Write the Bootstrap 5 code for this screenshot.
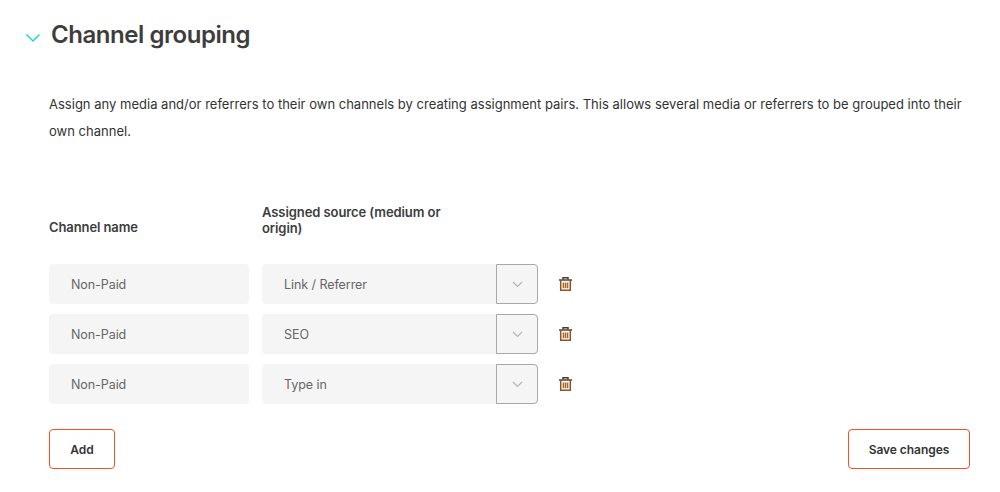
<!DOCTYPE html>
<html lang="en">

<head>
  <meta charset="UTF-8">
  <meta name="viewport" content="width=device-width, initial-scale=1.0">
  <title>Channel grouping</title>
  <link href="https://cdn.jsdelivr.net/npm/bootstrap@5.3.2/dist/css/bootstrap.min.css" rel="stylesheet">
  <style>
    body { font-family: Inter, "Liberation Sans", sans-serif; color: #3d3d3d; background: #fff; overflow: hidden; }
    .page-wrap { padding: 17px 30px 0 25px; height: 492px; }
    .page-title { font-size: 24px; font-weight: 600; line-height: 36px; margin: 0; letter-spacing: -0.45px; color: #3d3d3d; }
    .chev-icon { width: 16px; height: 10px; margin-top: 6px; margin-right: 10px; }
    .section-body { padding-left: 24px; }
    .intro-text { font-size: 13px; line-height: 27px; margin: 38px 0 0; letter-spacing: 0.01px; color: #333; }
    .head-row { margin-top: 52px; height: 46px; column-gap: 13px; }
    .col-name { width: 200px; font-size: 13px; font-weight: 600; line-height: 16px; letter-spacing: -0.1px; padding-top: 14px; }
    .col-source { width: 200px; font-size: 13px; font-weight: 600; line-height: 16px; letter-spacing: -0.08px; }
    .rows-wrap { margin-top: 21px; row-gap: 10px; }
    .pair-row { height: 40px; column-gap: 13px; }
    .field-box { background: #f5f5f5; border-radius: 4px; height: 40px; width: 200px; font-size: 12.5px; letter-spacing: -0.07px; color: #666; padding-left: 22px; }
    .field-label { padding-top: 2px; }
    .field-select { width: 276px; padding-left: 22px; }
    .select-btn { width: 42px; height: 40px; border: 1px solid #a8a8a8; border-radius: 0 4px 4px 0; background: #f5f5f5; }
    .select-btn svg { width: 11px; height: 7px; }
    .trash-icon { width: 13px; height: 14px; margin-left: 8px; margin-bottom: 1px; }
    .foot-row { margin-top: 25px; }
    .btn-outline-brand { border: 1px solid #f0512b; border-radius: 4px; background: #fff; color: #333; font-size: 12px; font-weight: 600; height: 40px; padding: 1px 0 0; letter-spacing: -0.05px; }
    .btn-outline-brand:hover { background: #fff; border-color: #f0512b; color: #333; }
    .add-btn { width: 66px; }
    .save-btn { width: 122px; }
  </style>
</head>

<body>
  <main class="page-wrap">
    <div class="d-flex align-items-center">
      <svg class="chev-icon flex-shrink-0" viewBox="0 0 16 10" fill="none" stroke="#1fd6dc" stroke-width="1.5"><path d="M1.5 1.5 8 8 14.5 1.5"/></svg>
      <h1 class="page-title">Channel grouping</h1>
    </div>

    <div class="section-body">
      <p class="intro-text">Assign any media and/or referrers to their own channels by creating assignment pairs. This allows several media or referrers to be grouped into their own channel.</p>

      <div class="head-row d-flex align-items-center">
        <div class="col-name">Channel name</div>
        <div class="col-source">Assigned source (medium or origin)</div>
      </div>

      <div class="rows-wrap d-flex flex-column">
        <div class="pair-row d-flex align-items-center">
          <div class="field-box field-label d-flex align-items-center">Non-Paid</div>
          <div class="field-box field-select d-flex align-items-center justify-content-between">
            <span class="field-label">Link / Referrer</span>
            <span class="select-btn d-flex align-items-center justify-content-center"><svg viewBox="0 0 11 7" fill="none" stroke="#b5b5b5" stroke-width="1.2"><path d="M1 1 5.5 5.5 10 1"/></svg></span>
          </div>
          <svg class="trash-icon" viewBox="0 0 13 14" fill="none" stroke-width="1.5"><path stroke="#3f3f3f" d="M4 2.5V.8h5v1.7"/><path stroke="#5e3f24" d="M0 3h13"/><path stroke="#8f5220" d="M1.7 3v10.2h9.6V3"/><path stroke="#a8662c" d="M4.4 5.5v5.8M6.5 5.5v5.8M8.6 5.5v5.8"/></svg>
        </div>
        <div class="pair-row d-flex align-items-center">
          <div class="field-box field-label d-flex align-items-center">Non-Paid</div>
          <div class="field-box field-select d-flex align-items-center justify-content-between">
            <span class="field-label">SEO</span>
            <span class="select-btn d-flex align-items-center justify-content-center"><svg viewBox="0 0 11 7" fill="none" stroke="#b5b5b5" stroke-width="1.2"><path d="M1 1 5.5 5.5 10 1"/></svg></span>
          </div>
          <svg class="trash-icon" viewBox="0 0 13 14" fill="none" stroke-width="1.5"><path stroke="#3f3f3f" d="M4 2.5V.8h5v1.7"/><path stroke="#5e3f24" d="M0 3h13"/><path stroke="#8f5220" d="M1.7 3v10.2h9.6V3"/><path stroke="#a8662c" d="M4.4 5.5v5.8M6.5 5.5v5.8M8.6 5.5v5.8"/></svg>
        </div>
        <div class="pair-row d-flex align-items-center">
          <div class="field-box field-label d-flex align-items-center">Non-Paid</div>
          <div class="field-box field-select d-flex align-items-center justify-content-between">
            <span class="field-label">Type in</span>
            <span class="select-btn d-flex align-items-center justify-content-center"><svg viewBox="0 0 11 7" fill="none" stroke="#b5b5b5" stroke-width="1.2"><path d="M1 1 5.5 5.5 10 1"/></svg></span>
          </div>
          <svg class="trash-icon" viewBox="0 0 13 14" fill="none" stroke-width="1.5"><path stroke="#3f3f3f" d="M4 2.5V.8h5v1.7"/><path stroke="#5e3f24" d="M0 3h13"/><path stroke="#8f5220" d="M1.7 3v10.2h9.6V3"/><path stroke="#a8662c" d="M4.4 5.5v5.8M6.5 5.5v5.8M8.6 5.5v5.8"/></svg>
        </div>
      </div>

      <div class="foot-row d-flex justify-content-between">
        <button type="button" class="btn btn-outline-brand add-btn">Add</button>
        <button type="button" class="btn btn-outline-brand save-btn">Save changes</button>
      </div>
    </div>
  </main>
  <script src="https://cdn.jsdelivr.net/npm/bootstrap@5.3.2/dist/js/bootstrap.bundle.min.js"></script>
</body>

</html>
